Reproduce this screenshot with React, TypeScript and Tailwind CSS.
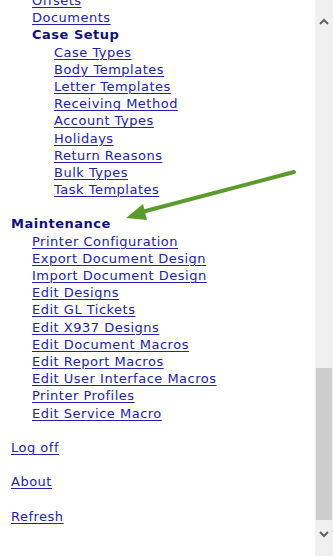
import React from "react";

const link = "text-[#2323a3] underline decoration-1 underline-offset-[2px] whitespace-nowrap";

function L({ children }: { children: React.ReactNode }) {
  return (
    <div className="h-[17.2px] leading-[17.2px]">
      <a href="#" className={link}>{children}</a>
    </div>
  );
}

function Gap() {
  return <div className="h-[17.2px]" />;
}

export default function App() {
  const caseSetup = [
    "Case Types",
    "Body Templates",
    "Letter Templates",
    "Receiving Method",
    "Account Types",
    "Holidays",
    "Return Reasons",
    "Bulk Types",
    "Task Templates",
  ];
  const maint = [
    "Printer Configuration",
    "Export Document Design",
    "Import Document Design",
    "Edit Designs",
    "Edit GL Tickets",
    "Edit X937 Designs",
    "Edit Document Macros",
    "Edit Report Macros",
    "Edit User Interface Macros",
    "Printer Profiles",
    "Edit Service Macro",
  ];
  return (
    <div
      className="relative flex h-[556px] w-[333px] overflow-hidden bg-white text-[13px] tracking-[0.5px]"
      style={{ fontFamily: '"DejaVu Sans", Verdana, sans-serif' }}
    >
      <div className="flex-1 overflow-hidden">
        <div className="-mt-[8px] pl-[11px]">
          <div className="pl-[21px]">
            <L>Offsets</L>
            <L>Documents</L>
            <div className="h-[17.2px] font-bold leading-[17.2px] text-[#10107a]">Case Setup</div>
            <div className="pl-[22px]">
              {caseSetup.map((t) => (
                <L key={t}>{t}</L>
              ))}
            </div>
          </div>
          <Gap />
          <div className="h-[17.2px] font-bold leading-[17.2px] text-[#10107a]">Maintenance</div>
          <div className="pl-[21px]">
            {maint.map((t) => (
              <L key={t}>{t}</L>
            ))}
          </div>
          <Gap />
          <L>Log off</L>
          <Gap />
          <L>About</L>
          <Gap />
          <L>Refresh</L>
        </div>
      </div>
      <div className="flex w-[18px] flex-col bg-[#f0f0f0]">
        <div className="flex h-[42px] items-center justify-center">
          <svg width="10" height="7" viewBox="0 0 10 7">
            <path d="M1 6 L5 2 L9 6" fill="none" stroke="#606060" strokeWidth="2" />
          </svg>
        </div>
        <div className="flex-1" />
        <div className="mx-[1px] h-[152px] bg-[#cdcdcd]" />
        <div className="flex h-[36px] justify-center pt-[11px]">
          <svg width="10" height="7" viewBox="0 0 10 7">
            <path d="M1 1 L5 5 L9 1" fill="none" stroke="#606060" strokeWidth="2" />
          </svg>
        </div>
      </div>
      <svg className="pointer-events-none absolute left-0 top-0" width="333" height="556">
        <line x1="294" y1="172" x2="138" y2="213" stroke="#5b9b2d" strokeWidth="4" strokeLinecap="round" />
        <path d="M126 218 L143 204 L147 220 Z" fill="#5b9b2d" />
      </svg>
    </div>
  );
}
